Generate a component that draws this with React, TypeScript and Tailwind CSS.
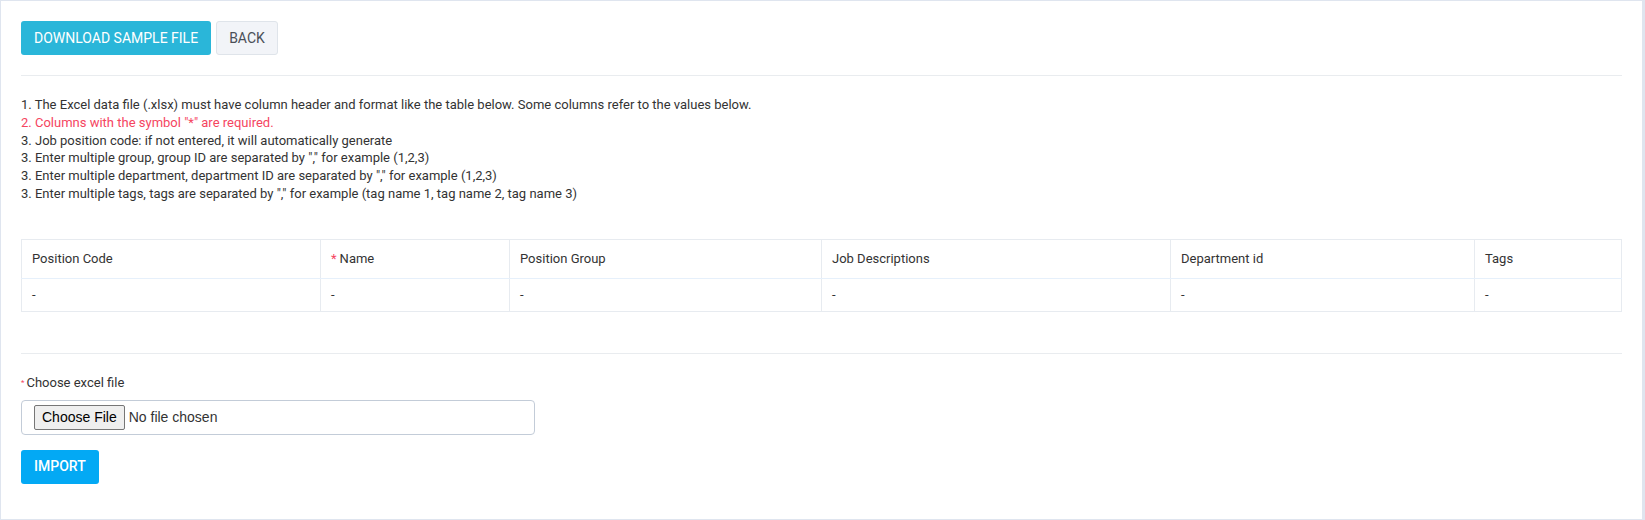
import React from 'react';

const notes = [
  { text: '1. The Excel data file (.xlsx) must have column header and format like the table below. Some columns refer to the values below.', red: false },
  { text: '2. Columns with the symbol "*" are required.', red: true },
  { text: '3. Job position code: if not entered, it will automatically generate', red: false },
  { text: '3. Enter multiple group, group ID are separated by "," for example (1,2,3)', red: false },
  { text: '3. Enter multiple department, department ID are separated by "," for example (1,2,3)', red: false },
  { text: '3. Enter multiple tags, tags are separated by "," for example (tag name 1, tag name 2, tag name 3)', red: false },
];

const columns = [
  { label: 'Position Code', width: 'w-[299px]', required: false },
  { label: 'Name', width: 'w-[189px]', required: true },
  { label: 'Position Group', width: 'w-[312px]', required: false },
  { label: 'Job Descriptions', width: 'w-[349px]', required: false },
  { label: 'Department id', width: 'w-[304px]', required: false },
  { label: 'Tags', width: '', required: false },
];

export default function App() {
  return (
    <div className="min-h-[520px] bg-[#dfe5ef] pt-px pl-px pr-[3px] pb-px font-['Roboto',sans-serif]">
      <div className="h-[518px] bg-white px-5 pt-5">
        {/* Actions */}
        <div className="flex gap-[5px]">
          <button className="h-[34px] rounded-[3px] bg-[#2ab6d9] px-[13px] text-[14px] text-white">
            DOWNLOAD SAMPLE FILE
          </button>
          <button className="h-[34px] rounded-[3px] border border-[#dfe4ea] bg-[#f2f4f8] px-3 text-[14px] text-[#4a4f57]">
            BACK
          </button>
        </div>

        <div className="mt-5 border-t border-[#e9ecef]" />

        {/* Instructions */}
        <div className="mt-[20px] text-[13px] leading-[17.8px] text-[#333]">
          {notes.map((n, i) => (
            <p key={i} className={n.red ? 'text-[#f5455f]' : ''}>
              {n.text}
            </p>
          ))}
        </div>

        {/* Sample table */}
        <table className="mt-[36px] w-full border-collapse text-[13px] text-[#333]">
          <thead>
            <tr className="h-[39px]">
              {columns.map((c) => (
                <th
                  key={c.label}
                  className={`${c.width} border border-[#e7ebf0] border-b-[#e6f0fb] px-[10px] text-left font-normal`}
                >
                  {c.required && <span className="mr-[3px] text-[#f5455f]">*</span>}
                  {c.label}
                </th>
              ))}
            </tr>
          </thead>
          <tbody>
            <tr className="h-[33px]">
              {columns.map((c) => (
                <td key={c.label} className="border border-[#e7ebf0] px-[10px]">
                  -
                </td>
              ))}
            </tr>
          </tbody>
        </table>

        <div className="mt-[41px] border-t border-[#e9ecef]" />

        {/* Upload */}
        <div className="mt-[20px]">
          <label className="flex items-center text-[13px] leading-[17px] text-[#333]">
            <span className="mr-[2px] text-[8px] text-[#f5455f]">*</span>
            Choose excel file
          </label>
          <div className="mt-[9px] flex h-[35px] w-[514px] items-center rounded-[4px] border border-[#c3ccd8] px-3">
            <input
              type="file"
              className="font-['Liberation_Sans',Arial,sans-serif] text-[14px] text-[#333] file:mr-[4px] file:rounded-[2px] file:border file:border-[#767676] file:bg-[#efefef] file:px-[7px] file:py-[1px] file:text-[#000]"
            />
          </div>
          <button className="mt-[15px] h-[34px] rounded-[3px] bg-[#03a9f4] px-[13px] text-[14px] font-medium text-white">
            IMPORT
          </button>
        </div>
      </div>
    </div>
  );
}
